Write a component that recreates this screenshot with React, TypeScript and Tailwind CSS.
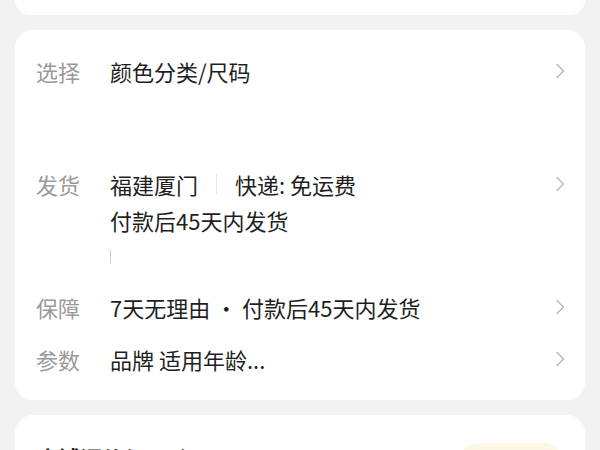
import React from "react";

const font = {
  fontFamily: '"Noto Sans CJK SC", "Noto Sans", sans-serif',
};

function Chevron() {
  return (
    <svg width="10" height="16" viewBox="0 0 10 16" fill="none" className="shrink-0">
      <path d="M2 1.5 L8.5 8 L2 14.5" stroke="#bdbdbd" strokeWidth="1.6" strokeLinecap="round" strokeLinejoin="round" />
    </svg>
  );
}

function Row({ label, children }: { label: string; children: React.ReactNode }) {
  return (
    <div className="flex items-start">
      <span className="w-[74px] shrink-0 text-[22px] leading-[36px] text-[#9a9a9a]">{label}</span>
      <div className="min-w-0 flex-1 text-[22px] leading-[36px] text-[#1f1f1f]">{children}</div>
      <div className="flex h-[36px] items-center pr-[20px]">
        <Chevron />
      </div>
    </div>
  );
}

export default function App() {
  return (
    <div className="h-[450px] w-[600px] overflow-hidden bg-[#f2f2f2]" style={font}>
      <div className="mx-[15px] h-[15px] rounded-b-[18px] bg-white" />

      <div className="mx-[15px] mt-[15px] rounded-[18px] bg-white pb-[23px] pl-[21px] pt-[23px]">
        <Row label="选择">颜色分类/尺码</Row>

        <div className="mt-[77px]">
          <Row label="发货">
            <div className="flex items-center">
              <span>福建厦门</span>
              <span className="mx-[18px] h-[22px] w-px bg-[#e6e6e6]" />
              <span>快递: 免运费</span>
            </div>
            <div>付款后45天内发货</div>
            <div className="mt-[12px] h-[14px] w-px bg-[#cfcfcf]" />
          </Row>
        </div>

        <div className="mt-[25px]">
          <Row label="保障">7天无理由 · 付款后45天内发货</Row>
        </div>
        <div className="mt-[16px]">
          <Row label="参数">品牌 适用年龄...</Row>
        </div>
      </div>

      <div className="mx-[15px] mt-[15px] flex h-[80px] items-start justify-between rounded-t-[18px] bg-white pl-[21px] pr-[24px] pt-[24px]">
        <span className="text-[22px] font-bold leading-[36px] text-[#1a1a1a]">店铺评价(1万+)</span>
        <span className="mt-[4px] rounded-full bg-[#fdf7e6] px-[16px] text-[17px] leading-[32px] text-[#c8a25a]">查看全部</span>
      </div>
    </div>
  );
}
